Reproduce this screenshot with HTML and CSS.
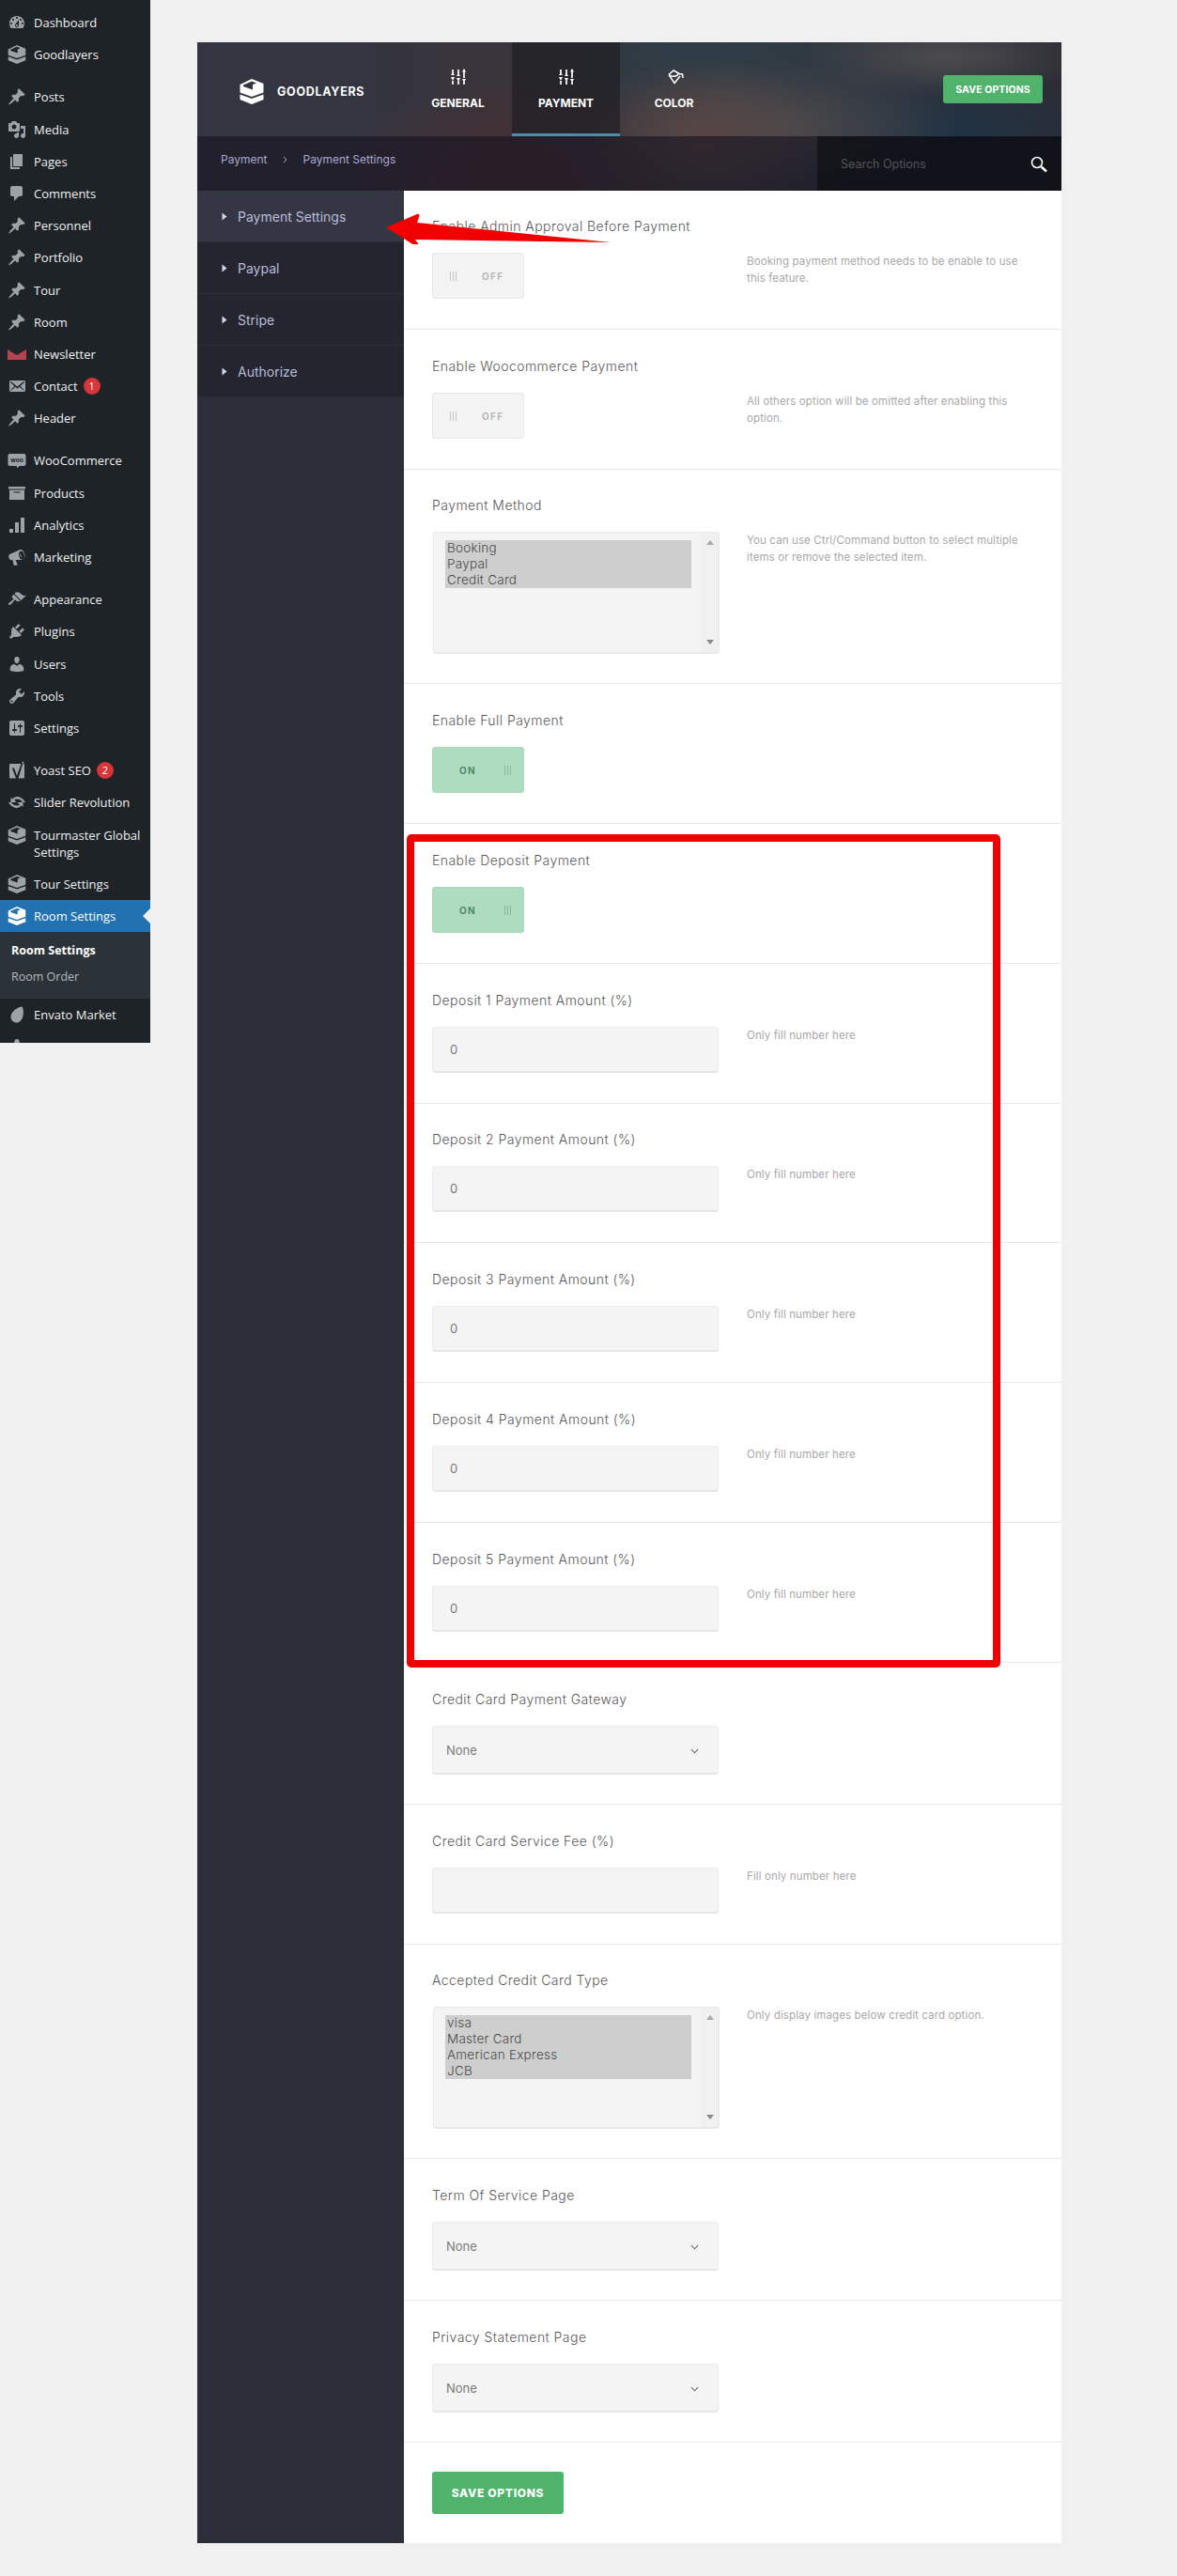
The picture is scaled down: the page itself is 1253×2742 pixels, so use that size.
FILE: index.html
```html
<!DOCTYPE html>
<html lang="en">
<head>
    <meta charset="UTF-8">
    <meta name="viewport" content="width=device-width, initial-scale=1.0">
    <title>Room Settings</title>
    <link rel="stylesheet" href="styles.css">
</head>
<body>
    <svg class="sprite" xmlns="http://www.w3.org/2000/svg">
        <symbol id="i-dashboard" viewBox="0 0 20 20"><path d="M3.76 16h12.48c1.1-1.37 1.76-3.11 1.76-5 0-4.42-3.58-8-8-8s-8 3.58-8 8c0 1.89.66 3.63 1.76 5zM10 4c.55 0 1 .45 1 1s-.45 1-1 1-1-.45-1-1 .45-1 1-1zM6 6c.55 0 1 .45 1 1s-.45 1-1 1-1-.45-1-1 .45-1 1-1zm8 0c.55 0 1 .45 1 1s-.45 1-1 1-1-.45-1-1 .45-1 1-1zm-5.37 5.55L12 7v6c0 1.1-.9 2-2 2s-2-.9-2-2c0-.57.24-1.08.63-1.45zM4 10c.55 0 1 .45 1 1s-.45 1-1 1-1-.45-1-1 .45-1 1-1zm12 0c.55 0 1 .45 1 1s-.45 1-1 1-1-.45-1-1 .45-1 1-1zm-5 3c0-.55-.45-1-1-1s-1 .45-1 1 .45 1 1 1 1-.45 1-1z"/></symbol>
        <symbol id="i-layers" viewBox="0 0 26 27"><path fill-rule="evenodd" d="M13 0l12.500 5v9.500L13 19 .5 14.500V6zM4 6.500l9-4 5 2-4 1.500v5.500L4 8z"/><path d="M.5 16.500L13 21l12.500-4.500V22L13 27 .5 22z"/></symbol>
        <symbol id="i-pin" viewBox="0 0 20 20"><path d="M10.440 3.020l1.820-1.820 6.360 6.350-1.830 1.820c-1.050-.68-2.480-.57-3.410.36l-.75.75c-.92.93-1.040 2.350-.35 3.410l-1.830 1.820-2.410-2.410-2.800 2.790c-.42.42-3.380 2.710-3.800 2.290s1.860-3.390 2.280-3.810l2.790-2.790L4.100 9.360l1.830-1.820c1.050.69 2.480.57 3.400-.36l.75-.75c.93-.92 1.050-2.350.36-3.410z"/></symbol>
        <symbol id="i-media" viewBox="0 0 20 20"><path d="M13 11V4c0-.55-.45-1-1-1h-1.670L9 1H5L3.670 3H2c-.55 0-1 .45-1 1v7c0 .55.45 1 1 1h10c.55 0 1-.45 1-1zM7 4.500c1.380 0 2.500 1.120 2.500 2.500S8.380 9.500 7 9.500 4.500 8.380 4.500 7 5.620 4.500 7 4.500zM14 6h5v10.500c0 1.380-1.120 2.500-2.500 2.500S14 17.880 14 16.500s1.120-2.500 2.500-2.500c.17 0 .34.02.5.05V9h-3V6zm-4 8.050V13h2v3.500c0 1.380-1.120 2.500-2.500 2.500S7 17.880 7 16.500 8.120 14 9.500 14c.17 0 .34.02.5.05z"/></symbol>
        <symbol id="i-page" viewBox="0 0 20 20"><path d="M6 15V2h10v13H6zm-1 1h8v2H3V5h2v11z"/></symbol>
        <symbol id="i-comment" viewBox="0 0 20 20"><path d="M5 2h9c1.100 0 2 .9 2 2v7c0 1.100-.9 2-2 2h-2l-5 5v-5H5c-1.100 0-2-.9-2-2V4c0-1.100.9-2 2-2z"/></symbol>
        <symbol id="i-newsletter" viewBox="0 0 20 20"><path d="M0 5l10 6 10-6v11H0z"/></symbol>
        <symbol id="i-mail" viewBox="0 0 20 20"><path d="M19 14.500v-9c0-.83-.67-1.500-1.500-1.500H3.490c-.83 0-1.500.67-1.500 1.500v9c0 .83.67 1.500 1.500 1.500H17.500c.83 0 1.500-.67 1.500-1.500zm-1.310-9.110c.33.33.15.67-.03.84L13.600 9.950l3.900 4.060c.12.14.2.36.06.51-.13.16-.43.15-.56.05l-4.370-3.730-2.140 1.950-2.130-1.950-4.370 3.730c-.13.1-.43.11-.56-.05-.14-.15-.06-.37.06-.51l3.900-4.060-4.060-3.720c-.18-.17-.36-.51-.03-.84s.67-.17.95.07l6.240 5.040 6.250-5.040c.28-.24.62-.4.95-.07z"/></symbol>
        <symbol id="i-products" viewBox="0 0 20 20"><path d="M19 3v2.500H1V3zM2 6.500h16V17H2zM13.500 9.500v-1h-7v1z"/></symbol>
        <symbol id="i-analytics" viewBox="0 0 20 20"><path d="M18 18V2h-4v16h4zm-6 0V7H8v11h4zm-6 0v-4H2v4h4z"/></symbol>
        <symbol id="i-marketing" viewBox="0 0 20 20"><path d="M13 2.200c2.300-.7 4.400 1.500 5.200 4.400.8 3-.1 5.800-2.300 6.400-.3.1-.6.1-.8.1H8.600l2 5c0 .3-.2.6-.5.6H7c-.3 0-.5-.2-.5-.5l-1-5.100h-1C3 13.600 1.900 12.300 1.500 10.600 1 8.900 1.400 7.400 2.800 6.800zm1 1.500c-1.800.5-2.400 2.800-1.700 5.300.7 2.500 2.400 4.200 4 3.600 1.600-.6 2.100-2.800 1.500-5.200-.7-2.500-2.300-4.200-3.800-3.700zm-.2 2.300c.2 1.500.7 2.800 1.800 4-1 .2-2-.8-2.300-2-.2-.8 0-1.500.5-2z" fill-rule="evenodd"/></symbol>
        <symbol id="i-brush" viewBox="0 0 20 20"><path d="M14.480 11.060L7.410 3.990l1.500-1.500c.5-.56 2.300-.47 3.510.32 1.210.8 1.430 1.280 2.910 2.100 1.180.64 2.450 1.260 4.450.85zm-.71.71L6.700 4.700 4.930 6.470c-.39.39-.39 1.020 0 1.410l1.060 1.060c.39.39.39 1.030 0 1.420-.6.6-1.430 1.110-2.210 1.690-.35.26-.7.530-1.010.84C1.430 13.230.4 14.840 1.190 15.630c.79.79 2.400-.24 3.720-1.580.31-.31.58-.66.84-1.010.58-.78 1.090-1.610 1.690-2.210.39-.39 1.020-.39 1.410 0l1.060 1.060c.39.39 1.020.39 1.410 0z"/></symbol>
        <symbol id="i-plug" viewBox="0 0 20 20"><path d="M13.110 4.360L9.870 7.600 8 5.730l3.240-3.240c.35-.34 1.050-.2 1.560.32.52.51.66 1.210.31 1.550zm-8 1.770l.91-1.120 9.010 9.010-1.190.84c-.71.71-2.630 1.160-3.820 1.160H6.140L4.900 17.260c-.59.59-1.540.59-2.120 0-.59-.58-.59-1.530 0-2.120l1.240-1.240v-3.880c0-1.130.4-3.190 1.090-3.890zm7.260 3.970l3.240-3.240c.34-.35 1.040-.21 1.550.31.52.51.66 1.210.31 1.550l-3.240 3.250z"/></symbol>
        <symbol id="i-user" viewBox="0 0 20 20"><path d="M10 9.250c-2.270 0-2.730-3.440-2.730-3.440C7 4.020 7.820 2 9.970 2c2.160 0 2.980 2.020 2.710 3.810 0 0-.41 3.440-2.680 3.440zm0 2.570L12.720 10c2.390 0 4.520 2.330 4.520 4.530v2.490s-3.650 1.130-7.240 1.130c-3.650 0-7.240-1.130-7.240-1.130v-2.490c0-2.250 1.940-4.480 4.470-4.480z"/></symbol>
        <symbol id="i-wrench" viewBox="0 0 20 20"><path d="M16.680 9.770c-1.340 1.340-3.300 1.670-4.950.99l-5.410 6.520c-.99.99-2.590.99-3.580 0s-.99-2.590 0-3.570l6.520-5.420c-.68-1.650-.35-3.610.99-4.950 1.280-1.280 3.120-1.620 4.720-1.060l-2.890 2.890 2.820 2.820 2.860-2.870c.53 1.580.18 3.390-1.080 4.650zM3.810 16.210c.4.39 1.040.39 1.430 0 .4-.4.4-1.040 0-1.430-.39-.4-1.030-.4-1.430 0-.39.39-.39 1.030 0 1.430z"/></symbol>
        <symbol id="i-settings" viewBox="0 0 20 20"><path d="M18 16V4c0-1.100-.9-2-2-2H4c-1.100 0-2 .9-2 2v12c0 1.100.9 2 2 2h12c1.100 0 2-.9 2-2zM8 11h1c.55 0 1 .45 1 1s-.45 1-1 1H8v1.500c0 .28-.22.5-.5.5s-.5-.22-.5-.5V13H6c-.55 0-1-.45-1-1s.45-1 1-1h1V5.500c0-.28.22-.5.5-.5s.5.22.5.5V11zm5-2h-1c-.55 0-1-.45-1-1s.45-1 1-1h1V5.500c0-.28.22-.5.5-.5s.5.22.5.5V7h1c.55 0 1 .45 1 1s-.45 1-1 1h-1v5.500c0 .28-.22.5-.5.5s-.5-.22-.5-.5V9z"/></symbol>
        <symbol id="i-yoast" viewBox="0 0 20 20"><path d="M3 3h11.500L10 15.500 7 7.500H4.800L9 18.500H3c-.6 0-1-.4-1-1V4c0-.6.4-1 1-1zM16 3.500L18 3v14.500c0 .6-.4 1-1 1h-5.500zM15.500 1l2-.6-.6 2-1.400.5z"/></symbol>
        <symbol id="i-slider" viewBox="0 0 20 20"><path d="M10 4c3.700 0 7 2.600 9 6h-3c-1-2-3.200-3.500-6-3.500-1.100 0-2.100.3-3 .8L9.500 10H3.500V5l1.800 1.400C6.700 5 8.300 4 10 4zM1 10h3c1 2 3.200 3.500 6 3.500 1.100 0 2.100-.3 3-.8L10.500 10h6v5l-1.800-1.400C13.300 15 11.700 16 10 16c-3.700 0-7-2.600-9-6z"/></symbol>
        <symbol id="i-envato" viewBox="0 0 20 20"><path d="M15.500 1.500c1.500 1.500 1.800 6.500.9 10.200-.9 3.800-3.300 6.800-6.700 6.800C6.300 18.500 3.500 16 3.500 12.500c0-2 .9-3.600 1.800-4.900C7.500 4.500 12.500 1.500 15.500 1.500z"/></symbol>
        <symbol id="i-sliders" viewBox="0 0 16 18"><path d="M2 5V1M2 13v4M8 1v5M8 13v4M14 1v9M14 14v3" fill="none" stroke="currentColor" stroke-width="1.700"/><path d="M0 7h4L2 4zM0 9h4l-2 4zM6 8h4L8 5zM6 10h4l-2 4zM12 3.500h4L14 0zM12 11h4l-2 4z"/></symbol>
        <symbol id="i-tri" viewBox="0 0 6 9"><path d="M0.500 0.500l5 4-5 4z"/></symbol>
        <symbol id="i-chevron" viewBox="0 0 10 6"><path d="M1 1l4 4 4-4" fill="none" stroke="currentColor" stroke-width="1.200"/></symbol>
    </svg>

    <div class="page">
        <nav class="wp-menu">
            <a class="wp-item"><svg class="wp-icon"><use href="#i-dashboard"/></svg>Dashboard</a>
            <a class="wp-item"><svg class="wp-icon"><use href="#i-layers"/></svg>Goodlayers</a>
            <div class="wp-gap"></div>
            <a class="wp-item"><svg class="wp-icon"><use href="#i-pin"/></svg>Posts</a>
            <a class="wp-item"><svg class="wp-icon"><use href="#i-media"/></svg>Media</a>
            <a class="wp-item"><svg class="wp-icon"><use href="#i-page"/></svg>Pages</a>
            <a class="wp-item"><svg class="wp-icon"><use href="#i-comment"/></svg>Comments</a>
            <a class="wp-item"><svg class="wp-icon"><use href="#i-pin"/></svg>Personnel</a>
            <a class="wp-item"><svg class="wp-icon"><use href="#i-pin"/></svg>Portfolio</a>
            <a class="wp-item"><svg class="wp-icon"><use href="#i-pin"/></svg>Tour</a>
            <a class="wp-item"><svg class="wp-icon"><use href="#i-pin"/></svg>Room</a>
            <a class="wp-item"><svg class="wp-icon wp-icon-red"><use href="#i-newsletter"/></svg>Newsletter</a>
            <a class="wp-item"><svg class="wp-icon"><use href="#i-mail"/></svg>Contact <span class="wp-badge">1</span></a>
            <a class="wp-item"><svg class="wp-icon"><use href="#i-pin"/></svg>Header</a>
            <div class="wp-gap"></div>
            <a class="wp-item">
                <svg class="wp-icon" viewBox="0 0 20 20"><path d="M2.500 3h15c1.100 0 2 .9 2 2v9c0 1.100-.9 2-2 2h-5l-2 2.500-1-2.500h-7c-1.100 0-2-.9-2-2V5c0-1.100.9-2 2-2z"/><text class="woo-text" x="10" y="12">woo</text></svg>WooCommerce
            </a>
            <a class="wp-item"><svg class="wp-icon"><use href="#i-products"/></svg>Products</a>
            <a class="wp-item"><svg class="wp-icon"><use href="#i-analytics"/></svg>Analytics</a>
            <a class="wp-item"><svg class="wp-icon"><use href="#i-marketing"/></svg>Marketing</a>
            <div class="wp-gap"></div>
            <a class="wp-item"><svg class="wp-icon"><use href="#i-brush"/></svg>Appearance</a>
            <a class="wp-item"><svg class="wp-icon"><use href="#i-plug"/></svg>Plugins</a>
            <a class="wp-item"><svg class="wp-icon"><use href="#i-user"/></svg>Users</a>
            <a class="wp-item"><svg class="wp-icon"><use href="#i-wrench"/></svg>Tools</a>
            <a class="wp-item"><svg class="wp-icon"><use href="#i-settings"/></svg>Settings</a>
            <div class="wp-gap"></div>
            <a class="wp-item"><svg class="wp-icon"><use href="#i-yoast"/></svg>Yoast SEO <span class="wp-badge">2</span></a>
            <a class="wp-item"><svg class="wp-icon"><use href="#i-slider"/></svg>Slider Revolution</a>
            <a class="wp-item"><svg class="wp-icon"><use href="#i-layers"/></svg><span>Tourmaster Global Settings</span></a>
            <a class="wp-item"><svg class="wp-icon"><use href="#i-layers"/></svg>Tour Settings</a>
            <a class="wp-item wp-item-current"><svg class="wp-icon"><use href="#i-layers"/></svg>Room Settings</a>
            <div class="wp-submenu">
                <a class="wp-subitem wp-subitem-current">Room Settings</a>
                <a class="wp-subitem">Room Order</a>
            </div>
            <a class="wp-item"><svg class="wp-icon"><use href="#i-envato"/></svg>Envato Market</a>
            <a class="wp-item"><svg class="wp-icon"><use href="#i-user"/></svg></a>
        </nav>

        <main class="main">
            <div class="panel">
                <header class="panel-head">
                    <div class="head-top">
                        <div class="brand">
                            <svg class="brand-logo"><use href="#i-layers"/></svg>
                            <span class="brand-name">GOODLAYERS</span>
                        </div>
                        <a class="tab">
                            <svg class="tab-icon"><use href="#i-sliders"/></svg>
                            GENERAL
                        </a>
                        <a class="tab tab-active">
                            <svg class="tab-icon"><use href="#i-sliders"/></svg>
                            PAYMENT
                        </a>
                        <a class="tab">
                            <svg class="tab-icon tab-icon-color" viewBox="0 0 20 18"><path d="M4 6.500L9 2l5.500 3-1.500 2M4 6.500l6 9 6-7.500M4 6.500c3 2 6 2.500 9.500.5M14.500 5.500l4 .5.500 4" fill="none" stroke="currentColor" stroke-width="1.500"/></svg>
                            COLOR
                        </a>
                        <button class="btn-save btn-save-small">SAVE OPTIONS</button>
                    </div>
                    <div class="head-bottom">
                        <div class="crumbs">
                            <span>Payment</span>
                            <svg class="crumb-sep" viewBox="0 0 6 8"><path d="M1 1l3 3-3 3" fill="none" stroke="currentColor"/></svg>
                            <span>Payment Settings</span>
                        </div>
                        <div class="search">
                            <input class="search-input" type="text" placeholder="Search Options">
                            <svg class="search-icon" viewBox="0 0 18 18"><circle cx="7" cy="7" r="5.500" fill="none" stroke="currentColor" stroke-width="1.600"/><path d="M11.500 11.500l5.500 5" stroke="currentColor" stroke-width="2.600"/></svg>
                        </div>
                    </div>
                </header>

                <div class="panel-body">
                    <aside class="side-nav">
                        <a class="side-item side-item-active"><svg class="side-tri"><use href="#i-tri"/></svg>Payment Settings</a>
                        <a class="side-item"><svg class="side-tri"><use href="#i-tri"/></svg>Paypal</a>
                        <a class="side-item"><svg class="side-tri"><use href="#i-tri"/></svg>Stripe</a>
                        <a class="side-item"><svg class="side-tri"><use href="#i-tri"/></svg>Authorize</a>
                    </aside>

                    <section class="options">
                        <div class="option option-tight">
                            <div class="option-label">Enable Admin Approval Before Payment</div>
                            <div class="option-body">
                                <div class="toggle"><span class="grip"></span><span class="toggle-text">OFF</span></div>
                                <p class="option-help">Booking payment method needs to be enable to use this feature.</p>
                            </div>
                        </div>
                        <div class="option">
                            <div class="option-label">Enable Woocommerce Payment</div>
                            <div class="option-body">
                                <div class="toggle"><span class="grip"></span><span class="toggle-text">OFF</span></div>
                                <p class="option-help">All others option will be omitted after enabling this option.</p>
                            </div>
                        </div>
                        <div class="option option-list">
                            <div class="option-label">Payment Method</div>
                            <div class="option-body">
                                <div class="list-field">
                                    <div class="list-items">
                                        <div class="list-item">Booking</div>
                                        <div class="list-item">Paypal</div>
                                        <div class="list-item">Credit Card</div>
                                    </div>
                                    <div class="list-scroll"><i class="arrow-up"></i><i class="arrow-down"></i></div>
                                </div>
                                <p class="option-help">You can use Ctrl/Command button to select multiple items or remove the selected item.</p>
                            </div>
                        </div>
                        <div class="option">
                            <div class="option-label">Enable Full Payment</div>
                            <div class="option-body">
                                <div class="toggle toggle-on"><span class="toggle-text">ON</span><span class="grip"></span></div>
                            </div>
                        </div>
                        <div class="option">
                            <div class="option-label">Enable Deposit Payment</div>
                            <div class="option-body">
                                <div class="toggle toggle-on"><span class="toggle-text">ON</span><span class="grip"></span></div>
                            </div>
                        </div>
                        <div class="option">
                            <div class="option-label">Deposit 1 Payment Amount (%)</div>
                            <div class="option-body">
                                <input class="text-field" type="text" value="0">
                                <p class="option-help">Only fill number here</p>
                            </div>
                        </div>
                        <div class="option option-tight">
                            <div class="option-label">Deposit 2 Payment Amount (%)</div>
                            <div class="option-body">
                                <input class="text-field" type="text" value="0">
                                <p class="option-help">Only fill number here</p>
                            </div>
                        </div>
                        <div class="option">
                            <div class="option-label">Deposit 3 Payment Amount (%)</div>
                            <div class="option-body">
                                <input class="text-field" type="text" value="0">
                                <p class="option-help">Only fill number here</p>
                            </div>
                        </div>
                        <div class="option">
                            <div class="option-label">Deposit 4 Payment Amount (%)</div>
                            <div class="option-body">
                                <input class="text-field" type="text" value="0">
                                <p class="option-help">Only fill number here</p>
                            </div>
                        </div>
                        <div class="option">
                            <div class="option-label">Deposit 5 Payment Amount (%)</div>
                            <div class="option-body">
                                <input class="text-field" type="text" value="0">
                                <p class="option-help">Only fill number here</p>
                            </div>
                        </div>
                        <div class="option option-select">
                            <div class="option-label">Credit Card Payment Gateway</div>
                            <div class="option-body">
                                <div class="select-field">None<svg class="select-chevron"><use href="#i-chevron"/></svg></div>
                            </div>
                        </div>
                        <div class="option">
                            <div class="option-label">Credit Card Service Fee (%)</div>
                            <div class="option-body">
                                <input class="text-field" type="text">
                                <p class="option-help">Fill only number here</p>
                            </div>
                        </div>
                        <div class="option option-list">
                            <div class="option-label">Accepted Credit Card Type</div>
                            <div class="option-body">
                                <div class="list-field">
                                    <div class="list-items">
                                        <div class="list-item">visa</div>
                                        <div class="list-item">Master Card</div>
                                        <div class="list-item">American Express</div>
                                        <div class="list-item">JCB</div>
                                    </div>
                                    <div class="list-scroll"><i class="arrow-up"></i><i class="arrow-down"></i></div>
                                </div>
                                <p class="option-help">Only display images below credit card option.</p>
                            </div>
                        </div>
                        <div class="option option-select">
                            <div class="option-label">Term Of Service Page</div>
                            <div class="option-body">
                                <div class="select-field">None<svg class="select-chevron"><use href="#i-chevron"/></svg></div>
                            </div>
                        </div>
                        <div class="option option-select">
                            <div class="option-label">Privacy Statement Page</div>
                            <div class="option-body">
                                <div class="select-field">None<svg class="select-chevron"><use href="#i-chevron"/></svg></div>
                            </div>
                        </div>
                        <div class="options-foot">
                            <button class="btn-save">SAVE OPTIONS</button>
                        </div>
                    </section>
                </div>

                <!-- annotations drawn over the screenshot -->
                <div class="mark-box"></div>
                <svg class="mark-arrow" viewBox="0 0 250 40"><path d="M1 22L34 8C36 7 37 9 36 11L34 17L240 38L32 35L35 39C36 42 33 42 31 41z"/></svg>
            </div>
        </main>
    </div>
</body>
</html>
```

FILE: styles.css
```css
* {
    box-sizing: border-box;
}

body {
    margin: 0;
    background-color: #f0f0f0;
    font-family: Inter, "Open Sans", sans-serif;
    color: #5a5a5a;
}

.sprite {
    display: none;
}

.page {
    display: flex;
    align-items: flex-start;
}

/* wordpress admin menu */
.wp-menu {
    flex: none;
    width: 160px;
    height: 1110px;
    padding-top: 7px;
    overflow: hidden;
    background-color: #1d2327;
    font-family: "Open Sans", sans-serif;
    font-size: 13px;
    line-height: 18px;
    color: #f0f0f1;
}

.wp-item {
    position: relative;
    display: flex;
    align-items: flex-start;
    min-height: 34.2px;
    padding: 8px 8px 8px 36px;
}

.wp-icon {
    flex: none;
    width: 20px;
    height: 20px;
    margin: -1px 8px -2px -28px;
    fill: #9ca2a7;
}

.wp-icon-red {
    fill: #b5444f;
}

.woo-text {
    font-family: Inter, sans-serif;
    font-size: 6.5px;
    font-weight: 700;
    text-anchor: middle;
    fill: #1d2327;
}

.wp-badge {
    display: inline-block;
    width: 18px;
    height: 18px;
    margin-left: 6px;
    border-radius: 50%;
    background-color: #d63638;
    font-size: 11px;
    line-height: 18px;
    text-align: center;
    color: #fff;
}

.wp-gap {
    height: 11px;
}

.wp-item-current {
    background-color: #2271b1;
    color: #fff;
}

.wp-item-current .wp-icon {
    fill: #fff;
}

.wp-item-current::after {
    content: "";
    position: absolute;
    top: 9px;
    right: 0;
    border: 8px solid transparent;
    border-right-color: #f0f0f1;
    border-left-width: 0;
}

.wp-submenu {
    height: 71px;
    padding: 10px 0;
    background-color: #2c3338;
    font-size: 12.5px;
}

.wp-subitem {
    display: block;
    height: 28px;
    padding: 1px 12px;
    color: #b4b9be;
}

.wp-subitem-current {
    font-weight: 700;
    color: #fff;
}

/* options panel */
.main {
    flex: 1;
    padding: 45px 0 35px 50px;
}

.panel {
    position: relative;
    width: 920px;
    background-color: #fff;
}

.panel-head {
    background-color: #2b2c36;
    background-image:
        radial-gradient(ellipse 130px 90px at 540px 105px, #5a4644 0%, rgba(90, 70, 68, 0) 100%),
        radial-gradient(ellipse 190px 70px at 620px 90px, #4a4a4c 0%, rgba(74, 74, 76, 0) 100%),
        radial-gradient(ellipse 150px 45px at 795px 15px, #4c4c4f 0%, rgba(76, 76, 79, 0) 100%),
        radial-gradient(ellipse 170px 90px at 800px 110px, #1d3346 0%, rgba(29, 51, 70, 0) 100%),
        radial-gradient(ellipse 260px 70px at 530px 15px, #2f3c46 0%, rgba(47, 60, 70, 0) 100%),
        radial-gradient(ellipse 200px 110px at 340px 150px, #4a2f35 0%, rgba(74, 47, 53, 0) 100%),
        linear-gradient(90deg, #333541 0%, #333541 18%, #3a3338 36%, #333a42 60%, #2c2c34 100%);
}

.head-top {
    display: flex;
    align-items: stretch;
    height: 100px;
}

.brand {
    display: flex;
    align-items: center;
    gap: 14px;
    width: 220px;
    padding: 5px 0 0 45px;
}

.brand-logo {
    width: 26px;
    height: 27px;
    fill: #fff;
}

.brand-name {
    font-size: 12.5px;
    font-weight: 700;
    letter-spacing: 0.7px;
    color: #fff;
}

.tab {
    display: flex;
    flex-direction: column;
    align-items: center;
    width: 115px;
    padding-top: 28px;
    border-bottom: 3px solid transparent;
    font-size: 12px;
    font-weight: 700;
    line-height: 14px;
    color: #fff;
}

.tab-active {
    background-color: rgba(32, 31, 35, 0.72);
    border-bottom-color: #4a8cab;
}

.tab-icon {
    width: 16px;
    height: 18px;
    margin-bottom: 12px;
    fill: #fff;
    color: #fff;
}

.tab-icon-color {
    width: 20px;
    fill: none;
}

.btn-save {
    width: 140px;
    height: 45px;
    padding: 0;
    border: none;
    border-radius: 3px;
    background-color: #4fb36b;
    font-family: Inter, sans-serif;
    font-size: 12px;
    font-weight: 800;
    letter-spacing: 0.7px;
    color: #fff;
}

.btn-save-small {
    width: 106px;
    height: 30px;
    margin: 35px 20px 0 auto;
    font-size: 10.5px;
    font-weight: 700;
    letter-spacing: 0.1px;
}

.head-bottom {
    display: flex;
    justify-content: space-between;
    height: 58px;
    background-color: rgba(22, 20, 32, 0.62);
}

.crumbs {
    display: flex;
    align-items: flex-start;
    gap: 16px;
    padding: 18px 0 0 25px;
    font-size: 12px;
    line-height: 14px;
    color: #a7a9cf;
}

.crumb-sep {
    width: 6px;
    height: 8px;
    margin-top: 3px;
}

.search {
    display: flex;
    align-items: center;
    width: 260px;
    padding: 0 15px 0 25px;
    background-color: rgba(12, 12, 16, 0.62);
}

.search-input {
    flex: 1;
    min-width: 0;
    padding: 0;
    border: none;
    outline: none;
    background: none;
    font-family: Inter, sans-serif;
    font-size: 12.5px;
}

.search-input::placeholder {
    color: #555459;
}

.search-icon {
    flex: none;
    width: 18px;
    height: 18px;
    margin-top: 2px;
    color: #fff;
}

.panel-body {
    display: flex;
}

.side-nav {
    flex: none;
    width: 220px;
    background-color: #2c2f3a;
}

.side-item {
    display: flex;
    align-items: center;
    height: 55px;
    padding-left: 26px;
    border-bottom: 1px solid #2c2d38;
    background-color: #24252f;
    font-size: 14px;
    color: #b9bcdc;
}

.side-item-active {
    background-color: #353643;
}

.side-tri {
    width: 6px;
    height: 9px;
    margin-right: 11px;
    fill: #d4d6ee;
}

.options {
    flex: 1;
    min-width: 0;
}

.option {
    padding: 30px 30px 32px;
    border-bottom: 1px solid #e9e9e9;
}

.option-tight {
    padding-top: 29px;
}

.option-list {
    padding: 29px 30px 31px;
}

.option-select {
    padding-bottom: 31px;
}

.option-label {
    margin-bottom: 19px;
    font-size: 14px;
    font-weight: 300;
    line-height: 18px;
    letter-spacing: 0.45px;
}

.option-body {
    display: flex;
    align-items: flex-start;
}

.option-help {
    width: 305px;
    margin: 0 0 0 auto;
    font-size: 11.5px;
    line-height: 18px;
    letter-spacing: 0.12px;
    color: #a8a8a8;
}

.toggle {
    display: flex;
    align-items: center;
    width: 98px;
    height: 49px;
    border: 1px solid #e6e6e6;
    border-radius: 3px;
    background-color: #f3f3f3;
    padding-left: 18px;
    font-size: 10px;
    font-weight: 700;
    letter-spacing: 1.3px;
    color: #b8b8b8;
}

.toggle-text {
    margin-left: 27px;
}

.grip {
    width: 7px;
    height: 10px;
    background-image: repeating-linear-gradient(90deg, #c6c6c6 0, #c6c6c6 1px, transparent 1px, transparent 3px);
}

.toggle-on {
    border-color: #a6d8ba;
    background-color: #aedcc0;
    padding-left: 1px;
    color: #4d8a68;
}

.toggle-on .grip {
    margin-left: 30px;
    background-image: repeating-linear-gradient(90deg, #86b89c 0, #86b89c 1px, transparent 1px, transparent 3px);
}

.text-field,
.select-field {
    flex: none;
    width: 305px;
    height: 49px;
    padding: 0 18px;
    border: 1px solid #ececec;
    border-bottom: 2px solid #e6e6e6;
    border-radius: 3px;
    outline: none;
    background-color: #f4f4f4;
    font-family: Inter, sans-serif;
    font-size: 13px;
    color: #7a7a7a;
}

.select-field {
    display: flex;
    align-items: center;
    justify-content: space-between;
    height: 52px;
    padding: 0 20px 0 14px;
}

.select-chevron {
    width: 9px;
    height: 6px;
    margin-top: 3px;
    color: #666;
}

.list-field {
    flex: none;
    display: flex;
    width: 305px;
    height: 130px;
    margin-left: 1px;
    padding-left: 12px;
    border: 1px solid #e8e8e8;
    border-bottom-width: 2px;
    border-radius: 3px;
    background-color: #f4f4f4;
    font-size: 13.5px;
    font-weight: 300;
    line-height: 17px;
    color: #4a4a4a;
}

.list-items {
    width: 262px;
    margin-top: 8px;
    align-self: flex-start;
    background-color: #cecece;
}

.list-item {
    padding-left: 2px;
    letter-spacing: 0.25px;
}

.list-scroll {
    display: flex;
    flex-direction: column;
    justify-content: space-between;
    align-items: center;
    width: 19px;
    height: 100%;
    margin-left: auto;
    padding: 8px 0;
    background-color: #f0f0f0;
}

.arrow-up,
.arrow-down {
    border: 4px solid transparent;
    border-top-width: 0;
    border-bottom: 5px solid #a8a8a8;
}

.arrow-down {
    border-top: 5px solid #8a8a8a;
    border-bottom-width: 0;
}

.options-foot {
    height: 107px;
    padding: 31px 30px 0;
}

/* red annotations lying over the page */
.mark-box {
    position: absolute;
    top: 843px;
    left: 223px;
    width: 632px;
    height: 887px;
    border: 8px solid #f00000;
    border-radius: 5px;
}

.mark-arrow {
    position: absolute;
    top: 175px;
    left: 200px;
    width: 250px;
    height: 40px;
    fill: #f00000;
}
```
